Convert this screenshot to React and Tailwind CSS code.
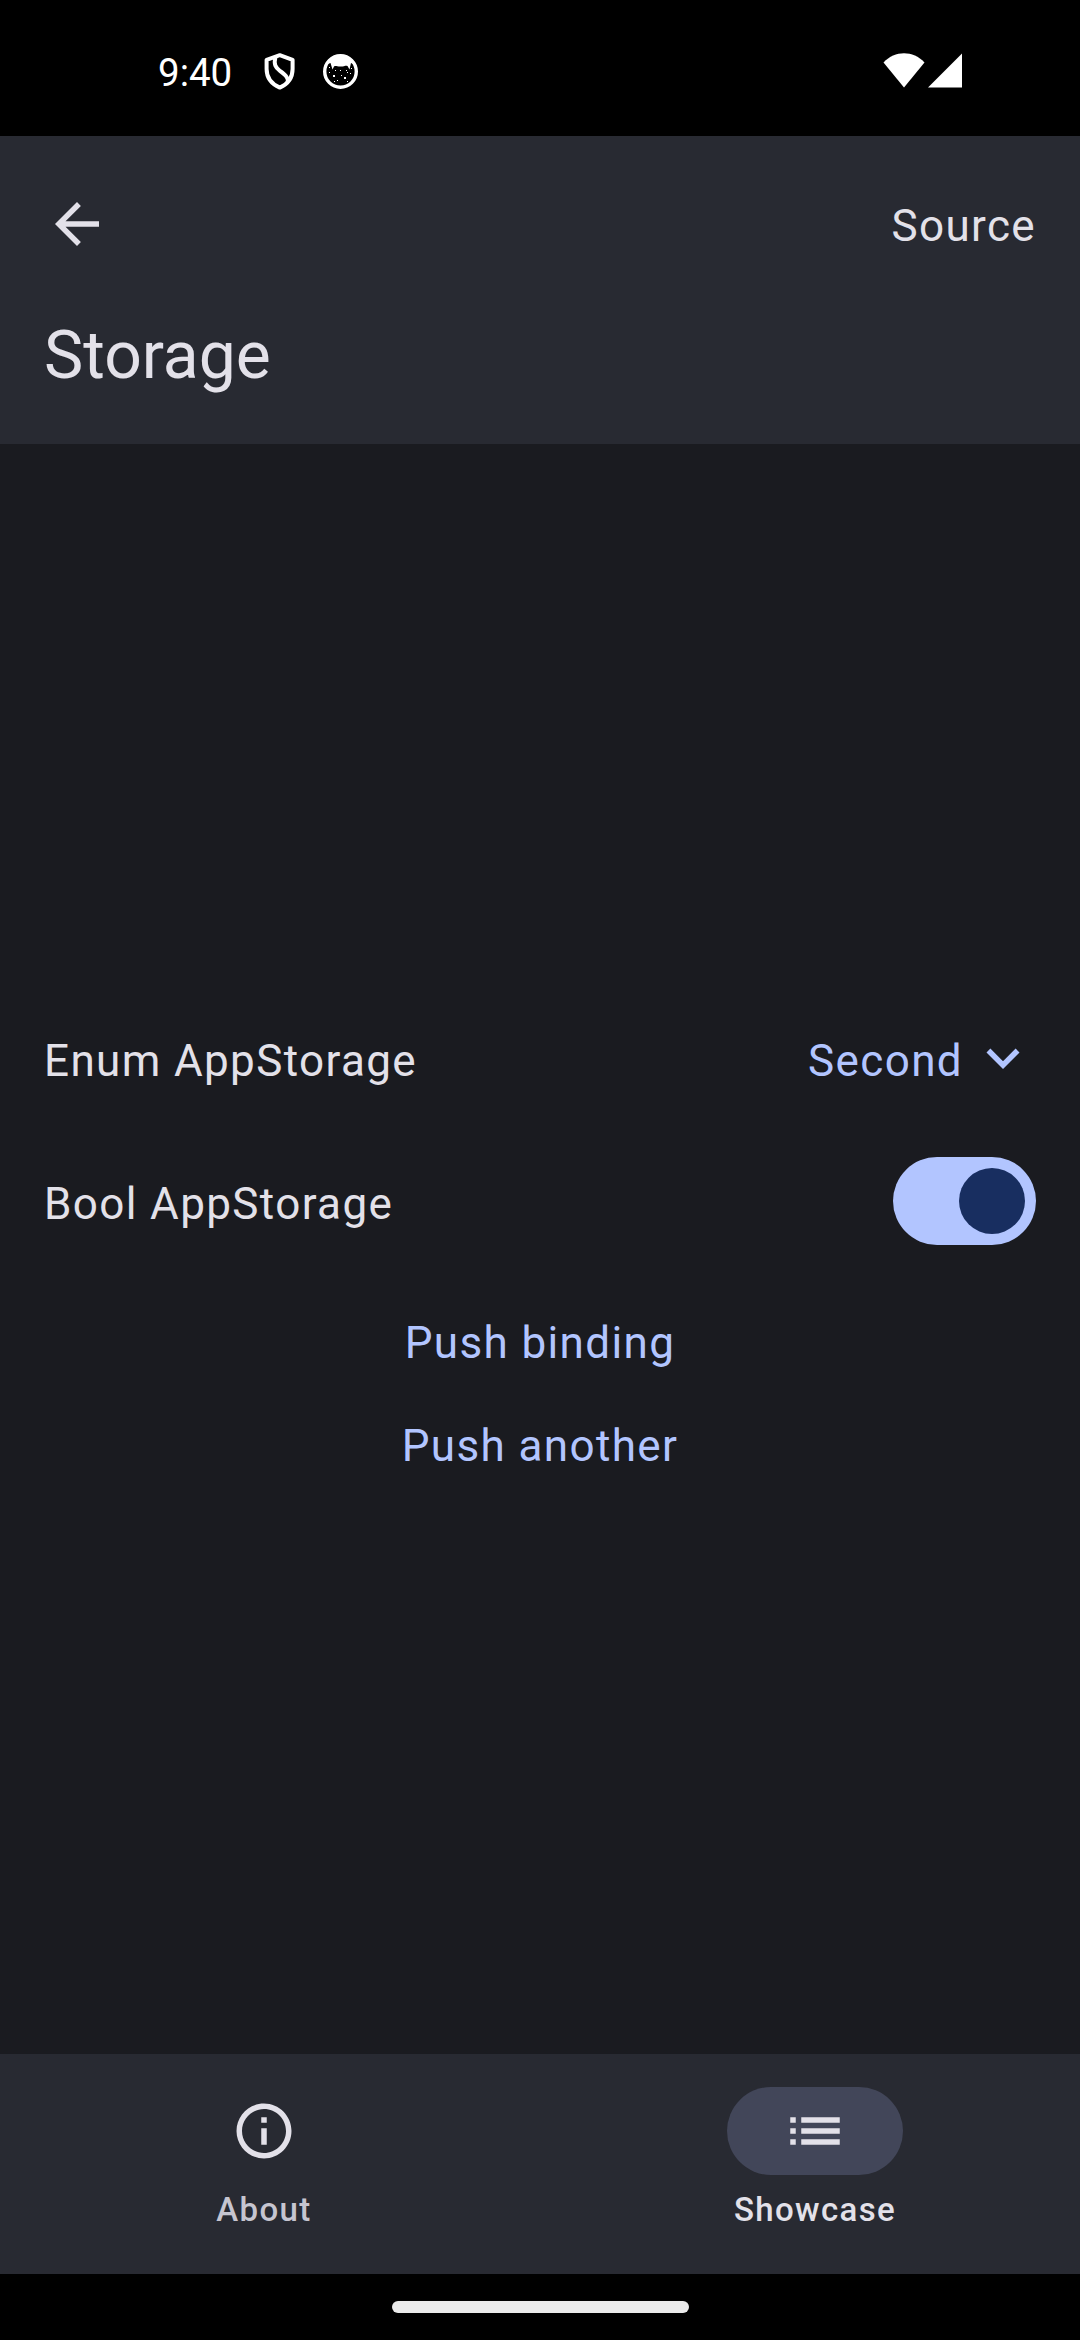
function StatusBar() {
  return (
    <div className="flex h-[136px] items-start justify-between bg-black pl-[158px] pr-[118px] pt-[51px] text-white">
      <div className="flex items-start">
        <span className="w-[76px] text-[38.5px] leading-[44px]">9:40</span>
        <svg className="ml-[30px] mt-[2px] h-[38px] w-8" viewBox="0 0 32 38" fill="none" stroke="currentColor" strokeWidth="4" strokeLinejoin="round">
          <path d="M15.8 2.2 L2.6 6.8 V16 C2.6 24.5 7.5 31 15.8 34.6 C24 31 28.6 24.5 28.6 16 V6.8 Z" />
          <path d="M11.4 4 C9.6 11.5 11.5 14.5 16 18 C21 21.8 24 24 24 28.4" />
        </svg>
        <svg className="ml-[26px] mt-[2px] h-[37px] w-[37px]" viewBox="0 0 37 37" fill="currentColor">
          <circle cx="18.5" cy="18.5" r="15.8" fill="none" stroke="currentColor" strokeWidth="3.4" />
          <path d="M6 7 C13 0 24 0 31 7 L31.5 11 L29 10 L27.5 16.5 L25.5 13 C23 12.4 22.5 13.6 18.5 13.6 C14.5 13.6 14 12.4 12 13.4 L10.5 16.5 L8.5 10 L5.5 11 Z" />
          <path d="M7 14h1v1h-1zM7 19h1v1h-1zM11 22h2v2h-2zM13 17h1v1h-1zM18 17h1v1h-1zM22 24h2v2h-2zM24 17h1v1h-1zM28 20h1v1h-1zM15 27h1v1h-1zM19 22h1v1h-1zM25 19h1v1h-1zM29 15h1v1h-1zM12 28h1v1h-1zM25 28h1v1h-1z" />
        </svg>
      </div>
      <div className="flex gap-[3px] pt-[2px]">
        <svg className="h-[35px] w-[42px]" viewBox="0 0 42 35" fill="currentColor">
          <path d="M21 34.5 L0.5 9.5 C12 -2.7 30 -2.7 41.5 9.5 Z" />
        </svg>
        <svg className="h-[35px] w-[34px]" viewBox="0 0 34 35" fill="currentColor">
          <path d="M34 0.5 V34.5 H0 Z" />
        </svg>
      </div>
    </div>
  );
}

function Header() {
  return (
    <header className="h-[308px] bg-[#282a32] px-[44px] pt-[55px]">
      <div className="flex h-[66px] items-start justify-between">
        <svg className="h-[66px] w-[66px]" viewBox="0 0 24 24" fill="currentColor">
          <path d="M20 11H7.83l5.59-5.59L12 4l-8 8 8 8 1.41-1.41L7.83 13H20v-2z" />
        </svg>
        <span className="mt-[2px] text-[44px] leading-[66px] tracking-[1.375px]">Source</span>
      </div>
      <h1 className="mt-[55px] text-[66px] leading-[88px]">Storage</h1>
    </header>
  );
}

function Content() {
  return (
    <main className="flex h-[1610px] flex-col px-[44px] pt-[584px] text-[44px] leading-[66px] tracking-[1.375px]">
      <div className="flex justify-between">
        <span>Enum AppStorage</span>
        <div className="flex text-[#b2c5ff]">
          <span>Second</span>
          <svg className="-mt-[3px] ml-[7px] h-[66px] w-[66px]" viewBox="0 0 24 24" fill="currentColor">
            <path d="M7.41 8.59 12 13.17l4.59-4.58L18 10l-6 6-6-6z" />
          </svg>
        </div>
      </div>
      <div className="mt-[63px] flex h-[88px] items-start justify-between">
        <span className="mt-[14px]">Bool AppStorage</span>
        <div className="flex h-[88px] w-[143px] items-center justify-end rounded-full bg-[#b2c5ff] pr-[11px]">
          <div className="h-[66px] w-[66px] rounded-full bg-[#182e60]" />
        </div>
      </div>
      <div className="mt-[65px] flex flex-col items-center gap-[37px] text-[#b2c5ff]">
        <span>Push binding</span>
        <span>Push another</span>
      </div>
    </main>
  );
}

function NavItem({ label, active, children }) {
  return (
    <div className="flex flex-col items-center">
      <div className={active ? "flex h-[88px] w-[176px] items-center justify-center rounded-full bg-[#424659]" : "flex h-[88px] w-[176px] items-center justify-center"}>
        <svg className="h-[66px] w-[66px]" viewBox="0 0 24 24" fill="currentColor">{children}</svg>
      </div>
      <span className={active ? "mt-[13px] text-[33px] font-medium leading-[44px] tracking-[1.375px]" : "mt-[13px] text-[33px] font-medium leading-[44px] tracking-[1.375px] text-[#c6c5d0]"}>{label}</span>
    </div>
  );
}

export default function App() {
  return (
    <div className="h-[2340px] w-[1080px] overflow-hidden bg-[#1a1b20] font-['Roboto',sans-serif] text-[#e3e1e9]">
      <StatusBar />
      <Header />
      <Content />
      <nav className="grid h-[220px] grid-cols-[528px_530px] gap-[22px] bg-[#282a32] pt-[33px]">
        <NavItem label="About">
          <path d="M11 7h2v2h-2zm0 4h2v6h-2zm1-9C6.48 2 2 6.48 2 12s4.48 10 10 10 10-4.48 10-10S17.52 2 12 2zm0 18c-4.41 0-8-3.59-8-8s3.59-8 8-8 8 3.59 8 8-3.59 8-8 8z" />
        </NavItem>
        <NavItem label="Showcase" active>
          <path d="M3 13h2v-2H3v2zm0 4h2v-2H3v2zm0-8h2V7H3v2zm4 4h14v-2H7v2zm0 4h14v-2H7v2zM7 7v2h14V7H7z" />
        </NavItem>
      </nav>
      <div className="flex h-[66px] justify-center bg-black pt-[27px]">
        <div className="h-[12px] w-[297px] rounded-full bg-[#ebebeb]" />
      </div>
    </div>
  );
}
